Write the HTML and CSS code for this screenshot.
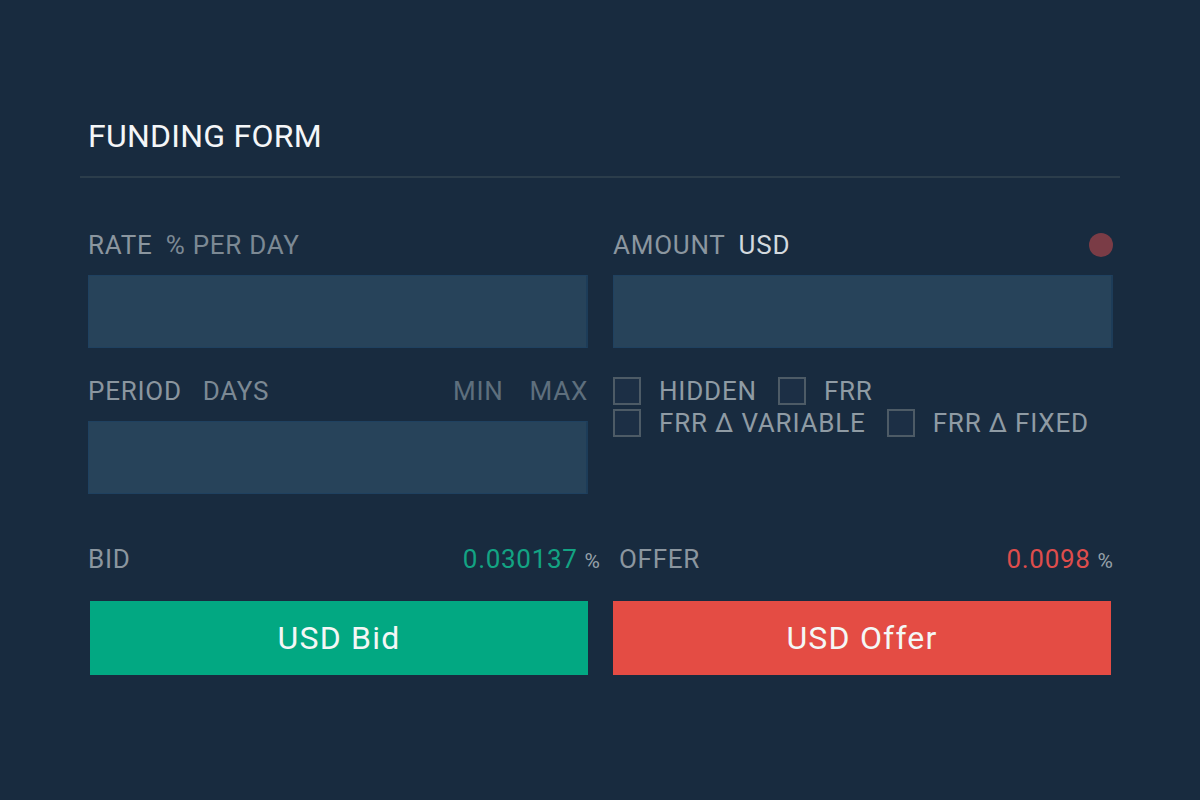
FILE: index.html
```html
<!DOCTYPE html>
<html>
<head>
<meta charset="utf-8">
<link rel="stylesheet" href="styles.css">
</head>
<body>
<div class="panel">
  <div class="header"><h1 class="title">FUNDING FORM</h1></div>
  <div class="grid">
    <div class="field">
      <div class="label-row">
        <span class="label">RATE</span><span class="unit">% PER DAY</span>
      </div>
      <div class="input"></div>
    </div>
    <div class="field">
      <div class="label-row">
        <span class="label">AMOUNT</span><span class="unit bright">USD</span>
        <span class="spacer"></span><span class="dot"></span>
      </div>
      <div class="input"></div>
    </div>
    <div class="field">
      <div class="label-row">
        <span class="label">PERIOD</span><span class="unit wide">DAYS</span>
        <span class="spacer"></span><span class="dim">MIN</span><span class="dim">MAX</span>
      </div>
      <div class="input"></div>
    </div>
    <div class="checks">
      <div class="check-row">
        <span class="box"></span><span class="check-label">HIDDEN</span>
        <span class="box"></span><span class="check-label">FRR</span>
      </div>
      <div class="check-row">
        <span class="box"></span><span class="check-label">FRR Δ VARIABLE</span>
        <span class="box"></span><span class="check-label">FRR Δ FIXED</span>
      </div>
    </div>
  </div>
  <div class="actions">
    <div class="action bid">
      <div class="price-row"><span class="label">BID</span><span class="price green">0.030137</span><span class="pct">%</span></div>
      <button class="btn btn-bid">USD Bid</button>
    </div>
    <div class="action offer">
      <div class="price-row"><span class="label">OFFER</span><span class="price red">0.0098</span><span class="pct">%</span></div>
      <button class="btn btn-offer">USD Offer</button>
    </div>
  </div>
</div>
</body>
</html>
```
FILE: styles.css
```css
html, body {
  margin: 0;
  padding: 0;
  background: #182b3f;
  font-family: Roboto, "Liberation Sans", sans-serif;
}
.panel {
  width: 1040px;
  margin: 0 0 0 80px;
  padding-top: 116px;
}
.header {
  border-bottom: 2px solid #2b3d4b;
  padding: 0 8px 20px;
}
.title {
  margin: 0;
  font-weight: 400;
  font-size: 32px;
  line-height: 40px;
  letter-spacing: 0.25px;
  color: #f4f6f8;
}
.grid {
  display: grid;
  grid-template-columns: 500px 500px;
  column-gap: 25px;
  padding: 50px 0 0 8px;
  row-gap: 26px;
}
.label-row {
  display: flex;
  align-items: center;
  height: 34px;
  margin-bottom: 13px;
  font-size: 26px;
  letter-spacing: 0.75px;
}
.label { color: #8b969f; }
.unit { color: #7c8994; margin-left: 13px; }
.unit.wide { margin-left: 21px; }
.unit.bright { color: #d3d9de; }
.spacer { flex: 1; }
.dim { color: #5e6f7d; margin-left: 26px; }
.dot {
  width: 24px;
  height: 24px;
  border-radius: 50%;
  background: #7a3c46;
}
.input {
  height: 73px;
  background: #27435a;
  border: 1px solid #1f4160;
  border-right: 2px solid #1d3c58;
  box-sizing: border-box;
}
.checks {
  display: flex;
  flex-direction: column;
  gap: 4px;
  margin-top: 3px;
}
.check-row {
  display: flex;
  align-items: center;
  font-size: 26px;
  letter-spacing: 0.8px;
  color: #8f9ba4;
  height: 28px;
}
.box {
  width: 28px;
  height: 28px;
  box-sizing: border-box;
  border: 2px solid #4d5b66;
  background: #1c2f45;
  margin-right: 18px;
  flex: none;
}
.check-label { margin-right: 21px; }
.actions {
  display: grid;
  grid-template-columns: 500px 500px;
  column-gap: 25px;
  padding: 50px 0 0 8px;
}
.price-row {
  display: flex;
  align-items: baseline;
  font-size: 26px;
  letter-spacing: 0.7px;
  height: 34px;
  margin-bottom: 23px;
}
.bid .price-row { margin-right: -12px; }
.offer .price-row { padding-left: 6px; }
.price { margin-left: auto; }
.green { color: #13a383; }
.red { color: #de4d4c; }
.pct {
  font-size: 21px;
  letter-spacing: 0;
  color: #96a1aa;
  margin-left: 7px;
}
.btn {
  display: block;
  width: 498px;
  height: 74px;
  border: none;
  margin: 0 0 0 2px;
  padding: 0;
  font-family: Roboto, "Liberation Sans", sans-serif;
  font-size: 32px;
  color: #f4f7f6;
  letter-spacing: 1.2px;
}
.offer .btn { margin-left: 0; }
.btn-bid { background: #02a882; }
.btn-offer { background: #e44c44; }
```
